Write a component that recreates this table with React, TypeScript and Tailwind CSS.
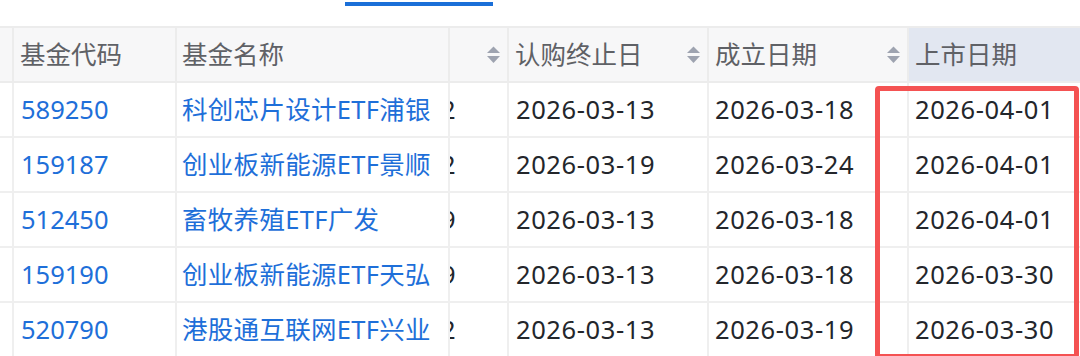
import React from "react";

const rows = [
  { code: "589250", name: "科创芯片设计ETF浦银", tail: "2026-03-12", sub: "2026-03-13", est: "2026-03-18", list: "2026-04-01" },
  { code: "159187", name: "创业板新能源ETF景顺", tail: "2026-03-12", sub: "2026-03-19", est: "2026-03-24", list: "2026-04-01" },
  { code: "512450", name: "畜牧养殖ETF广发", tail: "2026-03-09", sub: "2026-03-13", est: "2026-03-18", list: "2026-04-01" },
  { code: "159190", name: "创业板新能源ETF天弘", tail: "2026-03-09", sub: "2026-03-13", est: "2026-03-18", list: "2026-03-30" },
  { code: "520790", name: "港股通互联网ETF兴业", tail: "2026-03-12", sub: "2026-03-13", est: "2026-03-19", list: "2026-03-30" },
];

function SortIcon() {
  return (
    <svg width="15" height="18" viewBox="0 0 15 18" className="shrink-0">
      <path d="M1 7 L7.5 0.5 L14 7 Z" fill="#9ea3b0" />
      <path d="M1 10 L7.5 17 L14 10 Z" fill="#9ea3b0" />
    </svg>
  );
}

const cols = "grid grid-cols-[14px_163px_273px_59px_200px_200px_1fr]";

export default function App() {
  return (
    <div
      className="relative w-[1080px] h-[356px] overflow-hidden bg-white"
      style={{ fontFamily: '"Noto Sans", "Noto Sans CJK SC", sans-serif' }}
    >
      {/* tab underline */}
      <div className="h-[26px] pl-[345px] pt-[2px]">
        <div className="w-[148px] h-[4px] bg-[#1a6fd8]" />
      </div>

      {/* header */}
      <div className={`${cols} h-[57px] border-y-2 border-[#ececec] text-[25.5px] text-[#5f6166]`}>
        <div className="bg-[#f7f7f8] border-r-2 border-[#ececec]" />
        <div className="bg-[#f7f7f8] border-r-2 border-[#ececec] flex items-center pl-[6px]">基金代码</div>
        <div className="bg-[#f7f7f8] border-r-2 border-[#ececec] flex items-center pl-[5px]">基金名称</div>
        <div className="bg-[#f7f7f8] border-r-2 border-[#ececec] flex items-center justify-end pr-[6px]">
          <SortIcon />
        </div>
        <div className="bg-[#f7f7f8] border-r-2 border-[#ececec] flex items-center justify-between pl-[6px] pr-[6px]">
          <span>认购终止日</span>
          <SortIcon />
        </div>
        <div className="bg-[#f7f7f8] border-r-2 border-[#ececec] flex items-center justify-between pl-[6px] pr-[6px]">
          <span>成立日期</span>
          <SortIcon />
        </div>
        <div className="bg-[#e2e7f1] flex items-center pl-[6px]">上市日期</div>
      </div>

      {/* body */}
      {rows.map((r) => (
        <div key={r.code} className={`${cols} h-[55px] border-b-2 border-[#efefef] text-[25.5px]`}>
          <div className="border-r-2 border-[#efefef]" />
          <div className="border-r-2 border-[#efefef] flex items-center pl-[7px] text-[#1e6fd9]">{r.code}</div>
          <div className="border-r-2 border-[#efefef] flex items-center pl-[5px] text-[#1e6fd9] whitespace-nowrap tracking-[0.3px]">
            {r.name}
          </div>
          <div className="border-r-2 border-[#efefef] flex items-center overflow-hidden text-[#23262b]">
            <span className="whitespace-nowrap -ml-[133px] tracking-[0.6px]">{r.tail}</span>
          </div>
          <div className="border-r-2 border-[#efefef] flex items-center pl-[7px] text-[#23262b] tracking-[0.6px]">{r.sub}</div>
          <div className="border-r-2 border-[#efefef] flex items-center pl-[6px] text-[#23262b] tracking-[0.6px]">{r.est}</div>
          <div className="flex items-center pl-[6px] text-[#23262b] tracking-[0.6px]">{r.list}</div>
        </div>
      ))}

      {/* highlight box */}
      <div className="absolute left-[875px] top-[86px] w-[204px] h-[273px] border-[5px] border-[#f45252] rounded-[4px]" />
    </div>
  );
}
